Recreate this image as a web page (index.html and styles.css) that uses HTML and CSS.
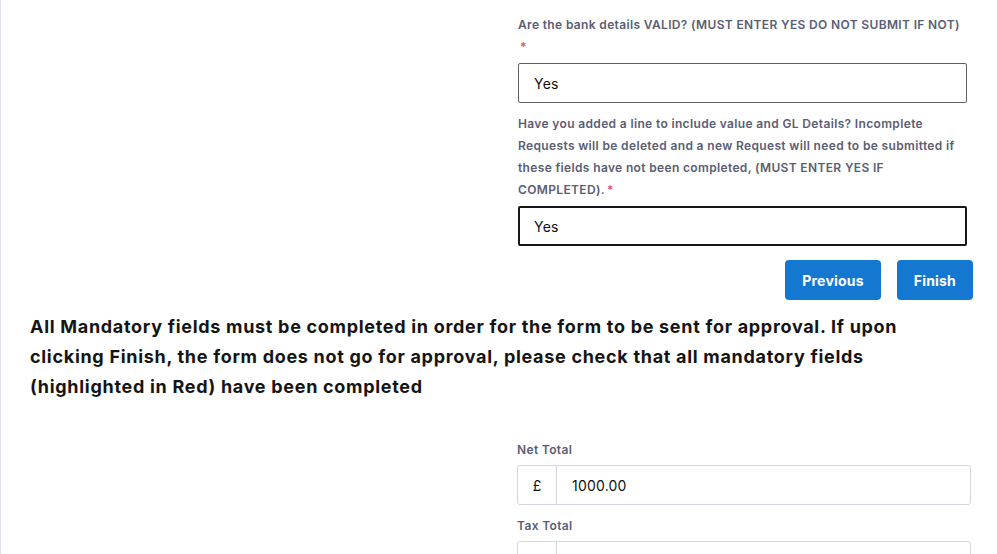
FILE: index.html
```html
<!DOCTYPE html>
<html lang="en">
<head>
  <meta charset="UTF-8" />
  <meta name="viewport" content="width=device-width, initial-scale=1.0"/>
  <title>Payment Request</title>
  <link rel="stylesheet" href="styles.css">
</head>
<body>
  <div class="page">

    <div class="step">
      <div class="field">
        <label class="field-label">Are the bank details VALID? (MUST ENTER YES DO NOT SUBMIT IF NOT)<br><span class="req">*</span></label>
        <input class="text-input" type="text" value="Yes">
      </div>

      <div class="field">
        <label class="field-label">Have you added a line to include value and GL Details? Incomplete<br>
          Requests will be deleted and a new Request will need to be submitted if<br>
          these fields have not been completed, (MUST ENTER YES IF<br>
          COMPLETED).<span class="req">*</span></label>
        <input class="text-input focused" type="text" value="Yes">
      </div>

      <div class="actions">
        <button class="btn" type="button">Previous</button>
        <button class="btn" type="button">Finish</button>
      </div>
    </div>

    <p class="notice">
      All Mandatory fields must be completed in order for the form to be sent for approval. If upon<br>
      clicking Finish, the form does not go for approval, please check that all mandatory fields<br>
      (highlighted in Red) have been completed
    </p>

    <div class="totals">
      <div class="field">
        <label class="field-label">Net Total</label>
        <div class="input-group">
          <span class="prefix">£</span>
          <input class="group-input" type="text" value="1000.00">
        </div>
      </div>
      <div class="field">
        <label class="field-label">Tax Total</label>
        <div class="input-group">
          <span class="prefix">£</span>
          <input class="group-input" type="text" value="">
        </div>
      </div>
    </div>

  </div>
</body>
</html>
```

FILE: styles.css
```css
* { margin: 0; padding: 0; box-sizing: border-box; }

body {
  background: #fff;
  color: #111;
  font-family: Inter, "Noto Sans", sans-serif;
  overflow: hidden;
}

.page {
  border-left: 1px solid #e2e2ea;
  min-height: 100vh;
  padding-top: 14px;
}

.step {
  margin-left: 517px;
  width: 450px;
}

.field-label {
  display: block;
  font-size: 12px;
  font-weight: 600;
  line-height: 22px;
  letter-spacing: 0.35px;
  color: #5a5d74;
  white-space: nowrap;
}

.req {
  color: #e0566a;
  margin-left: 2px;
}

.text-input {
  display: block;
  width: 449px;
  height: 40px;
  margin-top: 5px;
  margin-bottom: 10px;
  padding: 0 15px;
  border: 1px solid #5f5f66;
  border-radius: 2px;
  font-family: inherit;
  font-size: 14px;
  letter-spacing: 0.2px;
  color: #111;
  outline: none;
}

.text-input.focused {
  border: 2px solid #161616;
  padding: 0 14px;
  margin-bottom: 14px;
}

.actions {
  display: flex;
  justify-content: flex-end;
  gap: 16px;
  margin-right: -5px;
}

.btn {
  height: 40px;
  padding: 0 17px;
  background: #1578d0;
  color: #fff;
  border: none;
  border-radius: 4px;
  font-family: inherit;
  font-size: 14px;
  font-weight: 700;
  letter-spacing: 0.2px;
  cursor: pointer;
}

.notice {
  margin: 12px 0 0 29px;
  font-size: 18px;
  font-weight: 700;
  line-height: 30px;
  letter-spacing: 0.7px;
  color: #151515;
}

.totals {
  margin: 37px 0 0 516px;
  width: 454px;
}

.totals .field {
  margin-bottom: 10px;
}

.input-group {
  display: flex;
  height: 40px;
  margin-top: 4px;
  border: 1px solid #d6d6e0;
  border-radius: 3px;
}

.prefix {
  width: 39px;
  border-right: 1px solid #d6d6e0;
  display: flex;
  align-items: center;
  justify-content: center;
  font-size: 14px;
  color: #111;
}

.group-input {
  flex: 1;
  border: none;
  outline: none;
  padding: 0 15px;
  font-family: inherit;
  font-size: 14px;
  letter-spacing: 0.2px;
  color: #111;
  background: transparent;
}
```
